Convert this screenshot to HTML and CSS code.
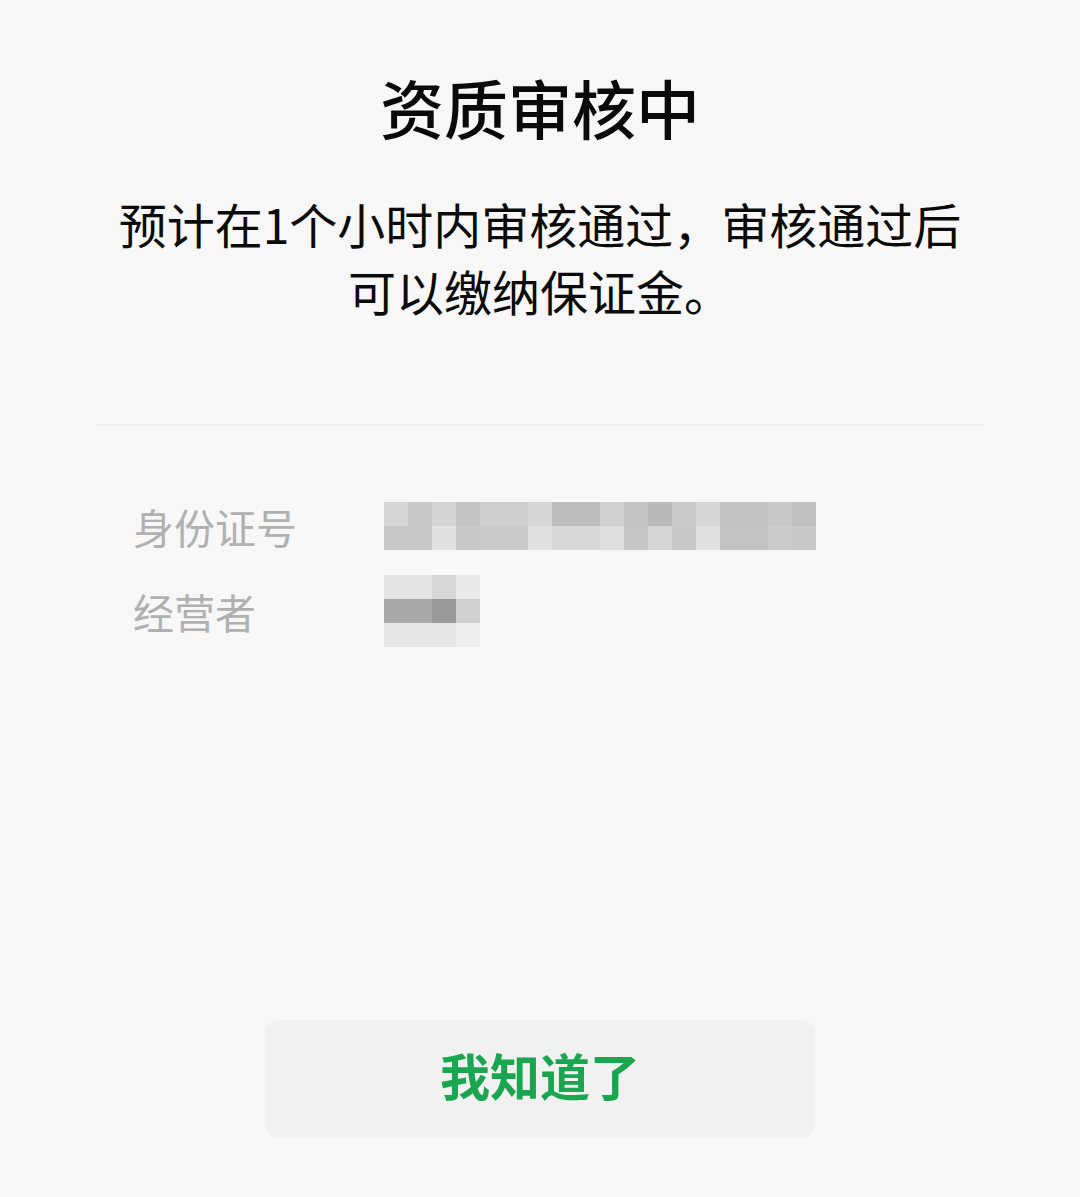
FILE: index.html
```html
<!DOCTYPE html>
<html lang="zh-CN">
<head>
    <meta charset="UTF-8">
    <meta name="viewport" content="width=device-width, initial-scale=1.0">
    <title>资质审核中</title>
    <link rel="stylesheet" href="styles.css">
</head>
<body>
    <div class="page">
        <h1 class="title">资质审核中</h1>
        <p class="desc">预计在1个小时内审核通过，审核通过后可以缴纳保证金。</p>

        <div class="divider"></div>

        <div class="info">
            <div class="info-row">
                <span class="info-label">身份证号</span>
                <div class="mosaic mosaic-id">
                    <i style="background:#d6d6d6"></i><i style="background:#c8c8c8"></i><i style="background:#d4d4d4"></i><i style="background:#c4c4c4"></i><i style="background:#cecece"></i><i style="background:#cecece"></i><i style="background:#d6d6d6"></i><i style="background:#bdbdbd"></i><i style="background:#bdbdbd"></i><i style="background:#d0d0d0"></i><i style="background:#c4c4c4"></i><i style="background:#b8b8b8"></i><i style="background:#cacaca"></i><i style="background:#d6d6d6"></i><i style="background:#c2c2c2"></i><i style="background:#c2c2c2"></i><i style="background:#c8c8c8"></i><i style="background:#c0c0c0"></i>
                    <i style="background:#c8c8c8"></i><i style="background:#c8c8c8"></i><i style="background:#e0e0e0"></i><i style="background:#c8c8c8"></i><i style="background:#cacaca"></i><i style="background:#cacaca"></i><i style="background:#e0e0e0"></i><i style="background:#d8d8d8"></i><i style="background:#d8d8d8"></i><i style="background:#dedede"></i><i style="background:#c6c6c6"></i><i style="background:#d6d6d6"></i><i style="background:#c8c8c8"></i><i style="background:#e0e0e0"></i><i style="background:#c4c4c4"></i><i style="background:#c4c4c4"></i><i style="background:#cccccc"></i><i style="background:#c8c8c8"></i>
                </div>
            </div>
            <div class="info-row">
                <span class="info-label">经营者</span>
                <div class="mosaic mosaic-name">
                    <i style="background:#e4e4e4"></i><i style="background:#e4e4e4"></i><i style="background:#d8d8d8"></i><i style="background:#e8e8e8"></i>
                    <i style="background:#a8a8a8"></i><i style="background:#a8a8a8"></i><i style="background:#999999"></i><i style="background:#d0d0d0"></i>
                    <i style="background:#e6e6e6"></i><i style="background:#e6e6e6"></i><i style="background:#e6e6e6"></i><i style="background:#eeeeee"></i>
                </div>
            </div>
        </div>

        <button class="ok-button">我知道了</button>
    </div>
</body>
</html>
```

FILE: styles.css
```css
* {
    box-sizing: border-box;
}
body {
    margin: 0;
    background: #f7f7f7;
    font-family: "Noto Sans CJK SC", "Noto Sans", sans-serif;
    color: #0a0a0a;
}
.page {
    height: 100vh;
    display: flex;
    flex-direction: column;
    padding: 0 96px;
}
.title {
    margin: 61px 0 0;
    font-size: 64px;
    line-height: 90px;
    font-weight: 500;
    text-align: center;
}
.desc {
    margin: 39px 0 0;
    padding: 0 12px;
    font-size: 48px;
    line-height: 67px;
    text-align: center;
}
.divider {
    margin-top: 100px;
    height: 2px;
    background: #ececec;
}
.info {
    margin-top: 57px;
    padding-left: 37px;
}
.info-row {
    display: flex;
    align-items: center;
    height: 85px;
}
.info-label {
    width: 251px;
    font-size: 41px;
    color: #b0b0b0;
}
.mosaic {
    display: grid;
    grid-auto-rows: 24px;
    filter: blur(0.6px);
}
.mosaic i {
    display: block;
}
.mosaic-id {
    grid-template-columns: repeat(18, 24px);
}
.mosaic-name {
    grid-template-columns: repeat(4, 24px);
}
.ok-button {
    align-self: center;
    margin: auto 0 59px;
    padding: 0 0 10px;
    width: 550px;
    height: 118px;
    border: none;
    border-radius: 14px;
    background: #f1f1f1;
    color: #1aa64f;
    font-family: "Noto Sans CJK SC", sans-serif;
    font-size: 50px;
    font-weight: 700;
    cursor: pointer;
}
```
